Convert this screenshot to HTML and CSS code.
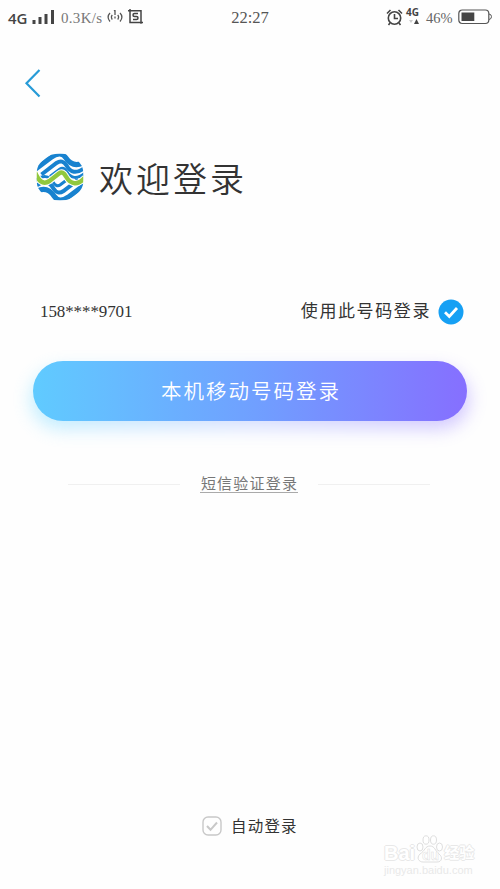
FILE: index.html
```html
<!DOCTYPE html>
<html lang="zh-CN">
<head>
<meta charset="utf-8">
<meta name="viewport" content="width=device-width">
<title>欢迎登录</title>
<link rel="stylesheet" href="styles.css">
</head>
<body>
<main class="screen">
  <header class="status">
    <div class="status-left">
      <b class="network">4G</b>
      <svg class="signal" width="23" height="16" viewBox="0 0 23 16"><path d="M2 11v4M8 8v7M14 5v10M20.500 1v14" stroke="#444" stroke-width="3"/></svg>
      <span class="speed">0.3K/s</span>
      <svg class="hotspot" width="16" height="14" viewBox="0 0 16 14" fill="none" stroke="#555" stroke-width="1.300"><path d="M3 3Q-.8 7 3 11.500M5.300 5Q3.500 7 5.300 9.500M13 3Q16.800 7 13 11.500M10.700 5Q12.500 7 10.700 9.500M7 1l1-.7V5M8 6.500v2"/></svg>
      <svg class="capture" width="15" height="16" viewBox="0 0 15 16" fill="none" stroke="#444" stroke-width="1.500"><path d="M0 1.800h13v13M2 0v13.500h13M10 4.500H6.500Q5 4.500 5 6T6.500 7.500h2Q10 7.500 10 9T8.500 10.500H5"/></svg>
    </div>
    <time>22:27</time>
    <div class="status-right">
      <svg class="alarm" width="17" height="17" viewBox="0 0 17 17" fill="none" stroke="#444" stroke-width="1.600"><circle cx="8.500" cy="9" r="6.200"/><path d="M8.500 5v4.500H12M1 4.500L4.500 1M12.500 1L16 4.500M4 14l-1.500 2M13 14l1.500 2"/></svg>
      <div class="data"><b>4G</b><svg width="10" height="5" viewBox="0 0 10 5"><path d="M0 1h4L2 4z" fill="#ccc"/><path d="M5 5h5L7.500 0z" fill="#444"/></svg></div>
      <span class="percent">46%</span>
      <svg class="battery" width="34" height="16" viewBox="0 0 34 16"><rect x=".8" y="1" width="30" height="13.500" rx="3.500" fill="none" stroke="#555" stroke-width="1.200"/><path d="M3.500 3.500h12.800v8.500H3.500z" fill="#444"/><path d="M31 5q2.500.3 2.500 2.700T31 10.500" fill="none" stroke="#555"/></svg>
    </div>
  </header>
  <nav class="nav"><svg width="18" height="30" viewBox="0 0 18 30"><path d="M15.500 2L2.500 15.300 15.500 28.500" fill="none" stroke="#279bd7" stroke-width="2.200"/></svg></nav>
  <section class="brand">
    <svg class="logo" width="48" height="48" viewBox="0 0 96 96" fill="none">
      <defs><clipPath id="disc"><path d="M48 1C66 1 77 8 86 18C94 27 95 35 95 48S94 69 86 78C77 88 66 95 48 95S19 88 10 78C2 69 1 61 1 48S2 27 10 18C19 8 30 1 48 1Z"/></clipPath></defs>
      <g clip-path="url(#disc)">
        <g id="waves" stroke="#1882cf">
          <path d="M-2 33L30 9Q50-5 60 10C68 22 80 28 98 18" stroke-width="10"/>
          <path d="M11 43L41 20Q53 12 61 25C69 39 80 43 98 29" stroke-width="8"/>
          <path d="M28 47L48 32Q55 27 62 38C70 51 82 53 98 40" stroke-width="6"/>
        </g>
        <use href="#waves" transform="rotate(180 48 48)"/>
        <path d="M-2 39C5 55 13 65 27 56L46 41Q54 35 60 47C69 63 84 66 98 49" stroke="#fff" stroke-width="13"/>
        <path d="M-2 39C5 55 13 65 27 56L46 41Q54 35 60 47C69 63 84 66 98 49" stroke="#91c83e" stroke-width="9"/>
      </g>
    </svg>
    <h1>欢迎登录</h1>
  </section>
  <section class="account">
    <span class="phone">158****9701</span>
    <label class="use-number"><span>使用此号码登录</span><svg width="26" height="26" viewBox="0 0 26 26"><circle cx="13" cy="13" r="12.500" fill="#16a0f4"/><path d="M7 13.200l4.300 4.200L19 9" fill="none" stroke="#fff" stroke-width="2.800"/></svg></label>
  </section>
  <button class="login">本机移动号码登录</button>
  <div class="sms"><i></i><a>短信验证登录</a><i></i></div>
  <footer class="auto">
    <svg width="20" height="20" viewBox="0 0 20 20" fill="none" stroke="#c8c8c8"><rect x="1" y="1" width="18" height="18" rx="5" stroke-width="1.400"/><path d="M5 10l3.500 3.800L15 6.500" stroke-width="2"/></svg>
    <span>自动登录</span>
  </footer>
  <aside class="watermark">
    <div class="mark"><span>Bai</span><svg width="27" height="28" viewBox="0 0 27 28" fill="#fff" stroke="#dedede"><ellipse cx="4" cy="12" rx="3" ry="4"/><ellipse cx="10" cy="5" rx="3" ry="4.200"/><ellipse cx="17.500" cy="5" rx="3" ry="4.200"/><ellipse cx="23.500" cy="12" rx="3" ry="4"/><path d="M14 11C9 11 9 16 4 19C0 23 3 27 7 27H21C26 27 27 22 23 19C19 16 19 11 14 11Z"/><text x="6" y="25">du</text></svg><span class="experience">经验</span></div>
    <div class="domain">jingyan.baidu.com</div>
  </aside>
</main>
</body>
</html>
```
FILE: styles.css
```css
* { box-sizing: border-box; }
body { margin: 0; background: #fefefe; color: #333; font-family: "Liberation Serif", "Noto Sans CJK SC", serif; }
svg { display: block; flex: none; }
.screen { position: relative; width: 500px; height: 889px; overflow: hidden; display: flex; flex-direction: column; }
.status { height: 36px; padding: 0 8px; display: grid; grid-template-columns: 1fr auto 1fr; align-items: center; color: #555; }
.status-left, .status-right { display: flex; align-items: center; }
.status-left svg { margin-top: -2px; }
.status-right { justify-content: flex-end; margin-top: -2px; }
.network { width: 21px; margin-right: 3px; font: 600 15px/20px "Open Sans", sans-serif; color: #444; }
.speed { width: 43px; margin-left: 6px; font-size: 15px; letter-spacing: .3px; color: #777; }
.status-left .hotspot { margin-left: 3px; }
.status-left .capture { margin-left: 5px; }
time { font-size: 16.500px; }
.data { width: 15px; margin: -3px 5px 0 3px; }
.data b { display: block; font: 700 10px/11px "Open Sans", sans-serif; color: #444; }
.data svg { margin: 1px 0 0 3px; }
.percent { width: 27px; font-size: 14.500px; color: #666; white-space: nowrap; margin-top: 2px; }
.battery { margin: 0 0 0 5px; }
.nav { height: 64px; padding: 32px 0 0 24px; }
.brand { height: 110px; margin-top: 25px; padding: 0 36px; display: flex; align-items: flex-start; }
.logo { margin-top: 28px; }
h1 { margin: 30px 0 0 15px; font-size: 34px; line-height: 52px; font-weight: 350; letter-spacing: 3px; color: #333; }
.account { height: 40px; margin-top: 57px; padding: 0 36px 0 40px; display: flex; align-items: center; justify-content: space-between; }
.phone { font-size: 17px; letter-spacing: -.1px; }
.use-number { display: flex; align-items: center; font-size: 17px; letter-spacing: 1.600px; gap: 7px; }
.use-number span { margin-top: -5px; }
.login { position: relative; flex: none; width: 434px; height: 60px; margin: 29px 0 0 33px; padding: 0 0 2px 2px; border: 0; border-radius: 30px; background: linear-gradient(90deg, #60cbff, #719dff 54%, #866fff); color: #fff; font: 350 20.500px/58px "Noto Sans CJK SC", sans-serif; letter-spacing: 2px; }
.login::before { content: ""; position: absolute; z-index: -1; inset: 8px -2px -8px; border-radius: 34px; background: linear-gradient(90deg, #78dcff, #a8bcff, #9b82ff); filter: blur(9px); opacity: .45; }
.sms { height: 24px; margin: 50px 70px 0 68px; display: flex; align-items: center; gap: 20px; }
.sms i { flex: 1; height: 1px; margin-top: 3px; background: #f0f0f0; }
.sms a { height: 18px; padding: 0 0 0 1px; margin-top: 2px; border-bottom: 1px solid #aaa; font-size: 15px; line-height: 18px; letter-spacing: 1.200px; color: #777; }
.auto { height: 24px; margin: 319px 0 0 202px; display: flex; align-items: center; gap: 9px; font-size: 15.500px; letter-spacing: 1.200px; }
.auto span { margin-top: -3px; }
.watermark { position: absolute; left: 384px; top: 834px; width: 92px; color: #fff; font-family: "Liberation Sans", "Noto Sans CJK SC", sans-serif; }
.mark { display: flex; align-items: flex-end; height: 29px; font-size: 20px; line-height: 20px; font-weight: 700; text-shadow: -1px 0 #e8e8e8, 1px 0 #e8e8e8, 0 -1px #e8e8e8, 0 1px #e8e8e8; }
.mark svg { margin: 0 1px; }
.mark text { font-size: 14px; stroke-width: .5px; text-shadow: none; }
.experience { font-size: 15px; }
.domain { font-size: 11px; line-height: 14px; color: #e9e9e9; white-space: nowrap; }
```
